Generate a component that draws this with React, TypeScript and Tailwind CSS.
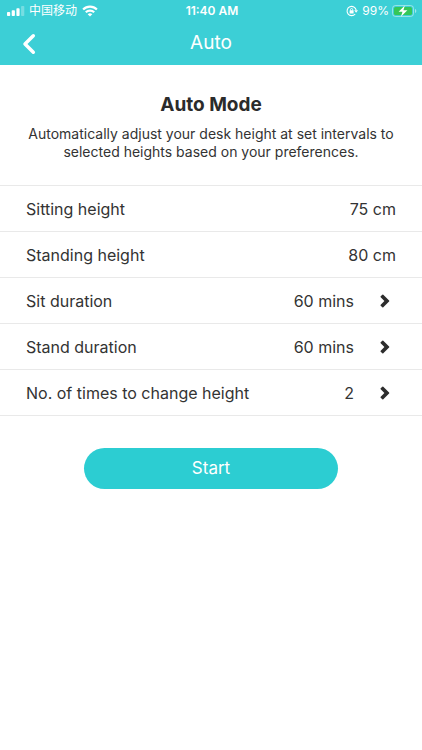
const rows = [
  { label: "Sitting height", value: "75 cm", editable: false },
  { label: "Standing height", value: "80 cm", editable: false },
  { label: "Sit duration", value: "60 mins", editable: true },
  { label: "Stand duration", value: "60 mins", editable: true },
  { label: "No. of times to change height", value: "2", editable: true },
]

function SignalIcon() {
  return (
    <svg viewBox="0 0 18 10" className="w-[18px] h-[10px]" fill="currentColor">
      <rect x="0" y="6" width="3.2" height="4" rx="0.8" />
      <rect x="4.7" y="4.2" width="3.2" height="5.8" rx="0.8" />
      <rect x="9.4" y="2.2" width="3.2" height="7.8" rx="0.8" />
      <rect x="14.1" y="0" width="3.2" height="10" rx="0.8" opacity="0.3" />
    </svg>
  )
}

function WifiIcon() {
  return (
    <svg viewBox="0 0 16 12" className="w-4 h-3" fill="none" stroke="currentColor" strokeWidth="2.2">
      <path d="M1.1 4.5a9.8 9.8 0 0 1 13.8 0" />
      <path d="M3.8 7.3a5.9 5.9 0 0 1 8.4 0" />
      <path d="M8 11.6 5.7 9.3a3.3 3.3 0 0 1 4.6 0z" fill="currentColor" stroke="none" />
    </svg>
  )
}

function RotationLockIcon() {
  return (
    <svg viewBox="0 0 12 12" className="w-3 h-3" fill="none" stroke="currentColor">
      <path d="M9.2 9A4.6 4.6 0 1 1 10.2 5.2" strokeWidth="1.1" />
      <path d="M8.2 5.2H12L10.1 7.7z" fill="currentColor" stroke="none" />
      <rect x="3.6" y="5.2" width="4" height="3.2" rx="0.5" fill="currentColor" stroke="none" />
      <path d="M4.5 5.5v-.9a1.1 1.1 0 0 1 2.2 0v.9" strokeWidth="0.9" />
    </svg>
  )
}

function BatteryIcon() {
  return (
    <svg viewBox="0 0 25 12" className="w-[25px] h-3">
      <rect x="0.5" y="0.5" width="21" height="11" rx="3" fill="none" stroke="#fff" strokeOpacity="0.45" />
      <rect x="2" y="2" width="18" height="8" rx="1.6" fill="#35c759" />
      <path d="M23 4v4c.8-.3 1.3-1.1 1.3-2S23.8 4.3 23 4z" fill="#fff" fillOpacity="0.5" />
      <path d="M12.8.4 6.6 6.7h3.9L8.9 11.7l6.5-6.4h-4z" fill="#fff" />
    </svg>
  )
}

function StatusBar() {
  return (
    <div className="grid grid-cols-3 items-center h-[22px] pl-[7px] pr-[5px] text-xs">
      <div className="flex items-center">
        <SignalIcon />
        <span className="ml-1 mr-[5px]">中国移动</span>
        <WifiIcon />
      </div>
      <span className="text-center font-semibold">11:40 AM</span>
      <div className="flex items-center justify-end">
        <RotationLockIcon />
        <span className="ml-1 mr-[3px]">99%</span>
        <BatteryIcon />
      </div>
    </div>
  )
}

function RowChevron() {
  return (
    <svg viewBox="0 0 10 14" className="w-[10px] h-[14px]" fill="#2d2d2d">
      <path d="M.7 2.3 2.3.7a.7.7 0 0 1 1 0L9.1 6.5a.7.7 0 0 1 0 1L3.3 13.3a.7.7 0 0 1-1 0L.7 11.7a.7.7 0 0 1 0-1L4.4 7 .7 3.3a.7.7 0 0 1 0-1z" />
    </svg>
  )
}

export default function App() {
  return (
    <div className="min-h-screen bg-white text-[#333333] font-['Inter','Noto_Sans_CJK_SC',sans-serif]">
      <header className="bg-[#3ccfd6] text-white">
        <StatusBar />
        <div className="grid grid-cols-3 items-center h-[43px] px-[22px]">
          <button aria-label="Back" className="w-[14px]">
            <svg viewBox="0 0 14 22" className="w-[14px] h-[22px]" fill="none" stroke="currentColor" strokeWidth="3.5">
              <path d="M11.3 2.8 3 11l8.3 8.2" strokeLinecap="round" strokeLinejoin="round" />
            </svg>
          </button>
          <h1 className="text-center text-[19px]">Auto</h1>
        </div>
      </header>

      <main>
        <section className="px-6 pt-7 pb-6 text-center">
          <h2 className="text-[19px] leading-6 font-bold text-[#2b2b2b]">Auto Mode</h2>
          <p className="mt-2 text-sm leading-[18px]">
            Automatically adjust your desk height at set intervals to selected heights based on your preferences.
          </p>
        </section>

        <ul className="border-t border-[#e9e9e9] text-base">
          {rows.map((row) => (
            <li key={row.label} className="border-b border-[#e9e9e9]">
              {row.editable ? (
                <button className="flex items-center w-full h-[45px] pl-[26px] pr-8 text-left">
                  <span className="flex-1">{row.label}</span>
                  <span className="mr-[26px]">{row.value}</span>
                  <RowChevron />
                </button>
              ) : (
                <div className="flex items-center justify-between h-[45px] px-[26px]">
                  <span>{row.label}</span>
                  <span>{row.value}</span>
                </div>
              )}
            </li>
          ))}
        </ul>

        <div className="px-[84px] pt-8">
          <button className="w-full h-[41px] rounded-full bg-[#2ccdd2] text-[17px] text-white">Start</button>
        </div>
      </main>
    </div>
  )
}
